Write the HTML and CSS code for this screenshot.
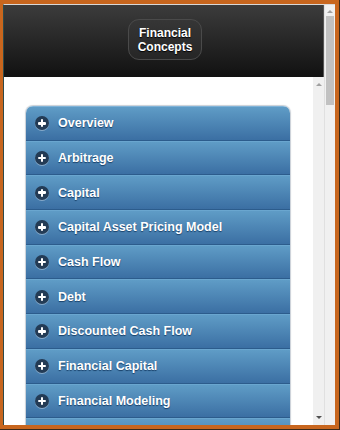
FILE: index.html
```html
<!DOCTYPE html>
<html>
<head>
<meta charset="utf-8">
<link rel="stylesheet" href="styles.css">
</head>
<body>
<div class="frame">
  <div class="window">
    <div class="main">
      <div class="header">
        <div class="title">Financial<br>Concepts</div>
      </div>
      <div class="body">
        <div class="content">
          <ul class="list">
            <li class="item first"><span class="icon"></span><span class="label">Overview</span></li>
            <li class="item"><span class="icon"></span><span class="label">Arbitrage</span></li>
            <li class="item"><span class="icon"></span><span class="label">Capital</span></li>
            <li class="item"><span class="icon"></span><span class="label">Capital Asset Pricing Model</span></li>
            <li class="item"><span class="icon"></span><span class="label">Cash Flow</span></li>
            <li class="item"><span class="icon"></span><span class="label">Debt</span></li>
            <li class="item"><span class="icon"></span><span class="label">Discounted Cash Flow</span></li>
            <li class="item"><span class="icon"></span><span class="label">Financial Capital</span></li>
            <li class="item"><span class="icon"></span><span class="label">Financial Modeling</span></li>
            <li class="item"></li>
          </ul>
        </div>
        <div class="vscroll inner">
          <span class="arrow up"></span>
          <span class="arrow down"></span>
        </div>
      </div>
    </div>
    <div class="vscroll outer">
      <span class="arrow up"></span>
      <span class="thumb"></span>
    </div>
  </div>
</div>
</body>
</html>
```
FILE: styles.css
```css
html, body {
  margin: 0;
  padding: 0;
  background: #2b2b2b;
}
.frame {
  width: 340px;
  height: 430px;
  box-sizing: border-box;
  background: #c8661e;
  padding: 4px 4px 4px 3px;
  border-right: 1px solid #3a2a1a;
  border-bottom: 1px solid #3a2a1a;
  overflow: hidden;
}
.window {
  display: flex;
  height: 421px;
  border-top: 1px solid #d9d9d9;
  border-left: 1px solid #2d4a4a;
  box-sizing: border-box;
  background: #fff;
}
.main {
  width: 321px;
  display: flex;
  flex-direction: column;
  overflow: hidden;
}
.header {
  height: 72px;
  flex: none;
  background: linear-gradient(#3c3c3c, #111);
  border-right: 1px solid #555;
  display: flex;
  align-items: flex-start;
  justify-content: center;
  box-sizing: border-box;
  padding-top: 14px;
}
.title {
  font-family: "Liberation Sans", Arial, sans-serif;
  font-weight: bold;
  font-size: 12px;
  line-height: 14px;
  color: #fff;
  text-align: center;
  text-shadow: 0 1px 1px #000;
  width: 74px;
  height: 41px;
  box-sizing: border-box;
  padding-top: 6px;
  border-radius: 11px;
  background: linear-gradient(#363636, #262626);
  border: 1px solid #4a4a4a;
  margin-left: 3px;
}
.body {
  flex: 1;
  display: flex;
  overflow: hidden;
}
.content {
  width: 309px;
  flex: none;
  background: #fff;
  overflow: hidden;
}
.list {
  list-style: none;
  margin: 29px 0 0 22px;
  padding: 0;
  width: 264px;
  border-radius: 7px 7px 0 0;
  overflow: hidden;
  box-shadow: 0 0 1px 1px #c9cfd6;
}
.item {
  height: 34.7px;
  box-sizing: border-box;
  display: flex;
  align-items: center;
  background: linear-gradient(#5f9cc6, #3b6fa3);
  border-top: 1px solid #6aa6cf;
  border-bottom: 1px solid #2c5c8c;
  font-family: "Liberation Sans", Arial, sans-serif;
  font-weight: bold;
  font-size: 12.5px;
  color: #fff;
  text-shadow: 0 1px 1px #173f68;
}
.item.first {
  border-top-color: #7fb3d8;
}
.icon {
  width: 14px;
  height: 14px;
  border-radius: 50%;
  background: #233b55;
  box-shadow: 0 1px 0 rgba(255,255,255,0.35);
  margin-left: 9px;
  margin-right: 9px;
  position: relative;
  flex: none;
}
.icon::before, .icon::after {
  content: "";
  position: absolute;
  background: #fff;
  border-radius: 1px;
}
.icon::before {
  left: 3px;
  top: 5.75px;
  width: 8px;
  height: 2.5px;
}
.icon::after {
  left: 5.75px;
  top: 3px;
  width: 2.5px;
  height: 8px;
}
.vscroll {
  flex: none;
  background: #f0f0f0;
  position: relative;
}
.vscroll.inner {
  width: 12px;
}
.vscroll.outer {
  width: 10px;
  border-left: 1px solid #e0e0e0;
}
.arrow {
  position: absolute;
  left: 50%;
  margin-left: -3px;
  width: 0;
  height: 0;
  border-left: 3px solid transparent;
  border-right: 3px solid transparent;
}
.arrow.up {
  top: 6px;
  border-bottom: 3px solid #a0a0a0;
}
.arrow.down {
  bottom: 6px;
  border-top: 3px solid #505050;
}
.vscroll.outer .arrow.up {
  top: 5px;
}
.thumb {
  position: absolute;
  left: 1px;
  right: 1px;
  top: 11px;
  height: 89px;
  background: #c1c1c1;
}
```
